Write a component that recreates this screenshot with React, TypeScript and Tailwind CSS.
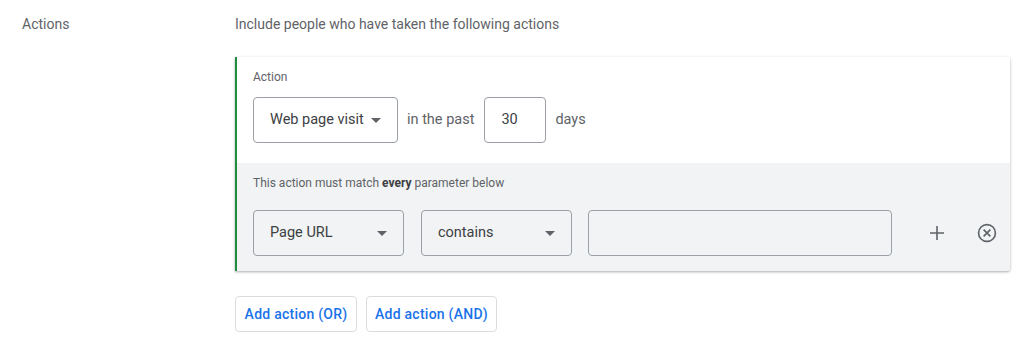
import React from "react";

function Caret() {
  return (
    <svg width="10" height="5" viewBox="0 0 10 5" className="shrink-0">
      <path d="M0 0 L10 0 L5 5 Z" fill="#5f6368" />
    </svg>
  );
}

function Select({ label, width }: { label: string; width: string }) {
  return (
    <div
      className={`${width} h-[46px] flex items-center justify-between pl-[16px] pr-[16px] border border-[#9aa0a6] rounded-[4px] text-[14.5px] text-[#3c4043]`}
    >
      <span>{label}</span>
      <Caret />
    </div>
  );
}

export default function App() {
  return (
    <div
      className="w-[1024px] h-[358px] bg-white flex"
      style={{ fontFamily: "Roboto, 'Liberation Sans', sans-serif" }}
    >
      <div className="w-[235px] pl-[22px] pt-[14px] text-[14px] leading-[20px] text-[#5f6368]">
        Actions
      </div>
      <div className="flex flex-col pt-[14px]">
        <div className="text-[14px] leading-[20px] text-[#5f6368]">
          Include people who have taken the following actions
        </div>
        <div className="mt-[23px] w-[775px] border-l-2 border-[#1e8e3e] rounded-r-[3px] shadow-[0_1px_3px_rgba(60,64,67,0.3),0_1px_2px_rgba(60,64,67,0.15)] overflow-hidden">
          <div className="bg-white pl-[16px] pt-[12px] pb-[20px]">
            <div className="text-[12px] leading-[16px] text-[#5f6368]">Action</div>
            <div className="mt-[12px] flex items-center text-[14.5px] text-[#5f6368]">
              <Select label="Web page visit" width="w-[145px]" />
              <span className="ml-[9px]">in the past</span>
              <div className="ml-[10px] w-[62px] h-[46px] border border-[#9aa0a6] rounded-[4px] flex items-center pl-[16px] text-[#3c4043]">
                30
              </div>
              <span className="ml-[9px]">days</span>
            </div>
          </div>
          <div className="bg-[#f1f3f4] pl-[16px] pt-[12px] pb-[15px]">
            <div className="text-[12px] leading-[16px] text-[#5f6368]">
              This action must match <span className="font-bold text-[#3c4043]">every</span> parameter below
            </div>
            <div className="mt-[19px] flex items-center">
              <Select label="Page URL" width="w-[151px]" />
              <div className="ml-[17px]">
                <Select label="contains" width="w-[151px]" />
              </div>
              <div className="ml-[16px] w-[304px] h-[46px] border border-[#9aa0a6] rounded-[4px]" />
              <svg width="14" height="14" viewBox="0 0 14 14" className="ml-[38px]">
                <path d="M7 0 V14 M0 7 H14" stroke="#5f6368" strokeWidth="1.6" />
              </svg>
              <svg width="22" height="22" viewBox="0 0 24 24" className="ml-[32px]">
                <circle cx="12" cy="12" r="9.2" fill="none" stroke="#5f6368" strokeWidth="1.8" />
                <path d="M8.3 8.3 L15.7 15.7 M15.7 8.3 L8.3 15.7" stroke="#5f6368" strokeWidth="1.8" />
              </svg>
            </div>
          </div>
        </div>
        <div className="mt-[25px] flex gap-[9px]">
          <button className="w-[122px] h-[36px] border border-[#dadce0] rounded-[4px] text-[14px] tracking-[0.25px] font-medium text-[#1a73e8] bg-white">
            Add action (OR)
          </button>
          <button className="w-[131px] h-[36px] border border-[#dadce0] rounded-[4px] text-[14px] tracking-[0.25px] font-medium text-[#1a73e8] bg-white">
            Add action (AND)
          </button>
        </div>
      </div>
    </div>
  );
}
